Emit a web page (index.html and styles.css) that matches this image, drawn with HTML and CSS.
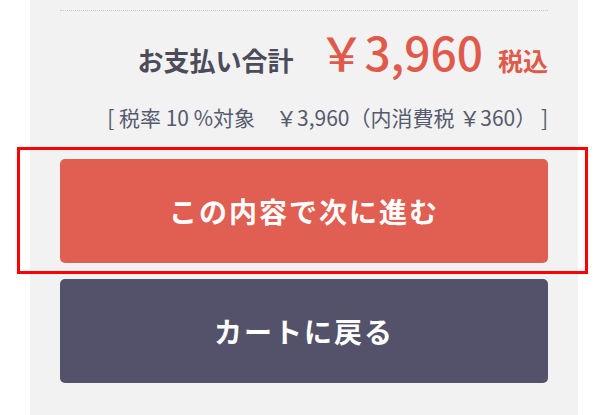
FILE: index.html
```html
<!DOCTYPE html>
<html lang="ja">
<head>
<meta charset="utf-8">
<link rel="stylesheet" href="styles.css">
</head>
<body>
<div class="panel">
  <div class="summary">
    <div class="total">
      <span class="total-label">お支払い合計</span>
      <span class="total-price">￥3,960</span>
      <span class="total-tax">税込</span>
    </div>
    <div class="tax-note">[ 税率 10 %対象　￥3,960（内消費税 ￥360） ]</div>
  </div>
  <div class="actions">
    <div class="btn-wrap">
      <button class="btn btn-next">この内容で次に進む</button>
      <div class="highlight"></div>
    </div>
    <button class="btn btn-back">カートに戻る</button>
  </div>
</div>
</body>
</html>
```
FILE: styles.css
```css
html, body {
  margin: 0;
  padding: 0;
  background: #ffffff;
  font-family: "Noto Sans CJK JP", "Noto Sans", sans-serif;
}
.panel {
  margin-left: 30px;
  width: 548px;
  height: 415px;
  box-sizing: border-box;
  background: #f2f2f2;
  padding: 10px 30px 0;
}
.summary {
  border-top: 1px dotted #c8c8c8;
  display: flex;
  flex-direction: column;
  align-items: flex-end;
}
.total {
  display: flex;
  align-items: baseline;
  margin-top: 17px;
  height: 58px;
}
.total-label {
  font-size: 26px;
  font-weight: 700;
  color: #4c4b5a;
  margin-right: 25px;
}
.total-price {
  font-size: 46px;
  font-weight: 500;
  color: #e05a4b;
  line-height: 1;
}
.total-tax {
  font-size: 25px;
  font-weight: 700;
  color: #e05a4b;
  margin-left: 15px;
}
.tax-note {
  font-size: 21px;
  color: #555a6e;
  margin-top: 16px;
  line-height: 30px;
}
.actions {
  margin-top: 27px;
  display: flex;
  flex-direction: column;
  gap: 16px;
}
.btn-wrap {
  position: relative;
}
.btn {
  display: flex;
  align-items: center;
  justify-content: center;
  width: 100%;
  height: 104px;
  border: none;
  border-radius: 5px;
  color: #ffffff;
  font-family: "Noto Sans CJK JP", "Noto Sans", sans-serif;
  font-size: 28px;
  font-weight: 700;
  letter-spacing: 2px;
  padding: 0;
}
.btn-next {
  background: #e05e52;
}
.btn-back {
  background: #53526a;
}
.highlight {
  position: absolute;
  left: -43px;
  right: -40px;
  top: -12px;
  bottom: -11px;
  border: 3px solid #ff0000;
  pointer-events: none;
}
```
